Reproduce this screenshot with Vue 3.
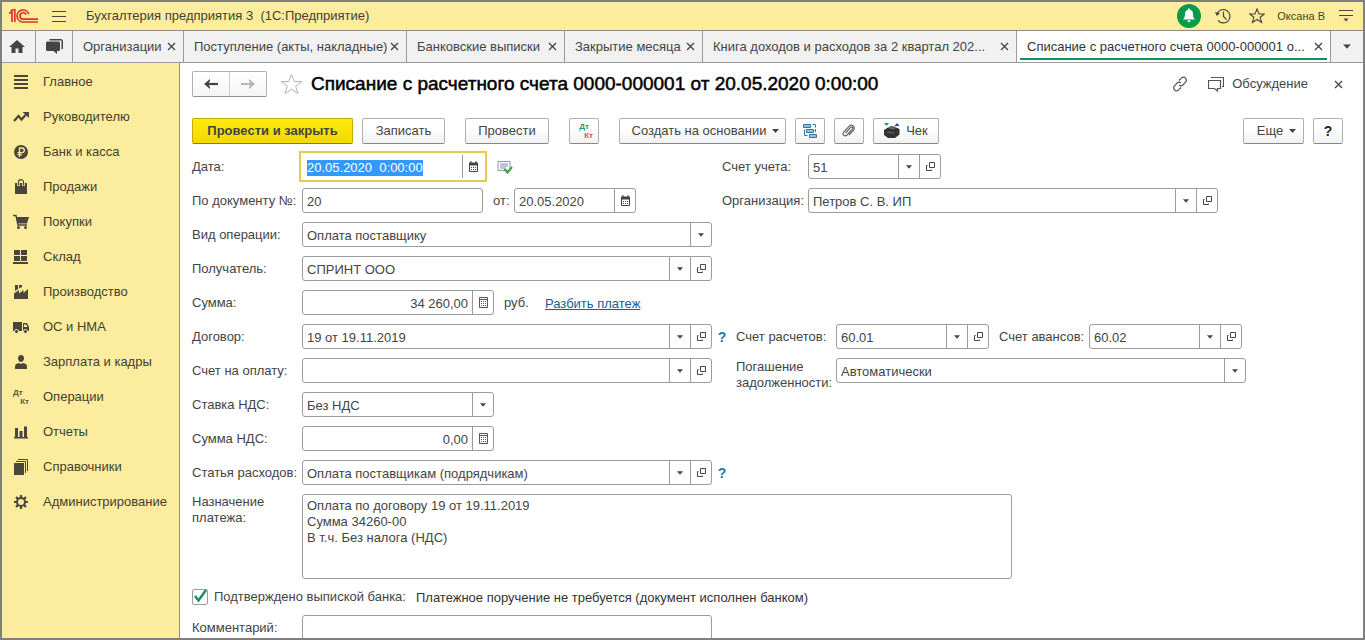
<script setup>
import { onMounted, ref } from 'vue'

const tabs = [
  { title: 'Организации', width: 111 },
  { title: 'Поступление (акты, накладные)', width: 223 },
  { title: 'Банковские выписки', width: 158 },
  { title: 'Закрытие месяца', width: 138 },
  { title: 'Книга доходов и расходов за 2 квартал 202...', width: 0 },
  { title: 'Списание с расчетного счета 0000-000001 о...', width: 0, active: true },
]

const sections = [
  { icon: 'lines', title: 'Главное' },
  { icon: 'trend', title: 'Руководителю' },
  { icon: 'ruble', title: 'Банк и касса' },
  { icon: 'bag', title: 'Продажи' },
  { icon: 'cart', title: 'Покупки' },
  { icon: 'stock', title: 'Склад' },
  { icon: 'factory', title: 'Производство' },
  { icon: 'truck', title: 'ОС и НМА' },
  { icon: 'person', title: 'Зарплата и кадры' },
  { icon: 'dtkt', title: 'Операции' },
  { icon: 'chart', title: 'Отчеты' },
  { icon: 'books', title: 'Справочники' },
  { icon: 'gear', title: 'Администрирование' },
]

const form = ref({
  date: '20.05.2020  0:00:00',
  number: '20',
  numberDate: '20.05.2020',
  account: '51',
  organization: 'Петров С. В. ИП',
  operation: 'Оплата поставщику',
  recipient: 'СПРИНТ ООО',
  sum: '34 260,00',
  contract: '19 от 19.11.2019',
  settlement: '60.01',
  advance: '60.02',
  invoice: '',
  repayment: 'Автоматически',
  vatRate: 'Без НДС',
  vatSum: '0,00',
  expense: 'Оплата поставщикам (подрядчикам)',
  purpose: 'Оплата по договору 19 от 19.11.2019\nСумма 34260-00\nВ т.ч. Без налога (НДС)',
  confirmed: true,
  comment: '',
})

const dateInput = ref(null)
onMounted(() => {
  dateInput.value.focus()
  dateInput.value.select()
})
</script>

<template>
  <div class="window">
    <svg class="sprite" aria-hidden="true">
      <symbol id="close" viewBox="0 0 9 9"><path d="M1 1l7 7M8 1L1 8" stroke="#444" stroke-width="1.3" fill="none" /></symbol>
      <symbol id="caret" viewBox="0 0 7 4"><path d="M0 0h7L3.500 4z" fill="#444" /></symbol>
      <symbol id="open" viewBox="0 0 11 11"><path d="M4.500 1.500h5v5h-5zM2.500 4.500h-1v5h5v-1" stroke="#444" fill="none" /></symbol>
      <symbol id="calendar" viewBox="0 0 11 11"><path d="M1.500 2.500h8v8h-8z" fill="#fff" stroke="#444" /><path d="M1 1.500h9v3H1zM2.500 0h1v2h-1zM7.500 0h1v2h-1z" fill="#444" /><path d="M3 6.500h6M3 8.500h6" stroke="#444" stroke-dasharray="1 1" /></symbol>
      <symbol id="calc" viewBox="0 0 11 11"><path d="M1.500.5h8v10h-8z" fill="#fff" stroke="#555" /><path d="M2 2.500h7" stroke="#555" /><path d="M3 4.500h6M3 6.500h6M3 8.500h6" stroke="#555" stroke-dasharray="1 1" /></symbol>

      <symbol id="lines" viewBox="0 0 16 16"><path d="M1 2h14M1 6h14M1 10h14M1 14h14" stroke="#4a463c" stroke-width="2" /></symbol>
      <symbol id="trend" viewBox="0 0 16 16"><path d="M1 12l4.500-5 3 3.500L13 5.500" stroke="#4a463c" stroke-width="2.200" fill="none" /><path d="M9.500 3H16v6z" fill="#4a463c" /></symbol>
      <symbol id="ruble" viewBox="0 0 16 16"><circle cx="8" cy="8" r="7" fill="#4a463c" /><path d="M6.500 13V4h2.500a2.300 2.300 0 0 1 0 4.600H4.500M4.500 10.600H9" stroke="#fbec9e" stroke-width="1.300" fill="none" /></symbol>
      <symbol id="bag" viewBox="0 0 16 16"><path d="M2 4h12v11H2z" fill="#4a463c" /><path d="M5.500 7V3.500a2.500 2.500 0 0 1 5 0V7" stroke="#fbec9e" stroke-width="2.800" fill="none" /><path d="M5.500 6.500V3.200a2.500 2.500 0 0 1 5 0v3.300" stroke="#4a463c" stroke-width="1.200" fill="none" /></symbol>
      <symbol id="cart" viewBox="0 0 16 16"><path d="M0 1.500h3l2 9.500h9" stroke="#4a463c" stroke-width="1.400" fill="none" /><path d="M3 3h13l-2 6.500H4.500z" fill="#4a463c" /><circle cx="5.500" cy="13.500" r="1.500" fill="#4a463c" /><circle cx="12.500" cy="13.500" r="1.500" fill="#4a463c" /></symbol>
      <symbol id="stock" viewBox="0 0 16 16"><path d="M1 1h6v5H1zM8 1h6v5H8zM1 7h6v5H1zM8 7h6v5H8zM0 13h15v2H0z" fill="#4a463c" /></symbol>
      <symbol id="factory" viewBox="0 0 16 16"><path d="M1 15V9.500L6 6v3.500L10.500 6v3L15 5v10zM2 1h3v4L2 7zM6 1h3v2L6 4.500z" fill="#4a463c" /></symbol>
      <symbol id="truck" viewBox="0 0 16 16"><path d="M0 3h9v9H0zM10 4h4l2 4v4h-6z" fill="#4a463c" /><path d="M11 5.500h2.300l1.200 2.500H11z" fill="#fbec9e" /><circle cx="3.500" cy="12.500" r="2" fill="#4a463c" stroke="#fbec9e" /><circle cx="12.500" cy="12.500" r="2" fill="#4a463c" stroke="#fbec9e" /></symbol>
      <symbol id="person" viewBox="0 0 16 16"><path d="M8 1c2 0 3 1.300 3 3.200S9.800 8 8 8 5 6.100 5 4.200 6 1 8 1zM2 15v-2.500C2 10 4 9.500 6 9l2 1 2-1c2 .5 4 1 4 3.500V15z" fill="#4a463c" /></symbol>
      <symbol id="chart" viewBox="0 0 16 16"><path d="M1 13h14v1.500H1zM2 4h3v9H2zM6.500 7h3v6h-3zM11 2.500h3V13h-3z" fill="#4a463c" /></symbol>
      <symbol id="books" viewBox="0 0 16 16"><path d="M1 4h10v12H1z" fill="#4a463c" /><path d="M3 2.500h9.500V14M5 .5h9.500V12" stroke="#4a463c" fill="none" /></symbol>
      <symbol id="gear" viewBox="0 0 16 16"><circle cx="8" cy="8" r="4" fill="none" stroke="#4a463c" stroke-width="2" /><path d="M8 1v2.500M8 12.500V15M1 8h2.500M12.500 8H15M3.050 3.050l1.800 1.800M11.150 11.150l1.800 1.800M3.050 12.950l1.800-1.800M11.150 4.850l1.800-1.800" stroke="#4a463c" stroke-width="2.200" /></symbol>
    </svg>

    <header class="titlebar">
      <svg class="logo" width="29" height="14" viewBox="0 0 29 14" role="img" aria-label="1С">
        <g fill="none" stroke="#d8372a" stroke-width="1.700">
          <path d="M0 4.500L3 2.800V13M1.500 1.800L5.800.2V13" />
          <path d="M19.800 5.200A6 6 0 1 0 14.500 13H29" />
          <path d="M17 5.500A3.200 3.200 0 1 0 14.500 10.200H29" />
        </g>
      </svg>
      <button class="plain" aria-label="Меню">
        <svg width="14" height="13" viewBox="0 0 14 13"><path d="M0 1.500h14M0 6.500h14M0 11.500h14" stroke="#4a463c" /></svg>
      </button>
      <span class="app-name">Бухгалтерия предприятия 3 &nbsp;(1С:Предприятие)</span>
      <button class="plain" aria-label="Оповещения">
        <svg width="24" height="24" viewBox="0 0 24 24"><circle cx="12" cy="12" r="12" fill="#0a9a4a" /><path d="M12 4.500c.8 0 1.200.5 1.200 1.200 2 .6 2.800 2.300 2.800 4.300 0 3 .8 4.300 2 5.500H6c1.200-1.200 2-2.500 2-5.500 0-2 .8-3.700 2.800-4.300 0-.7.4-1.200 1.200-1.200zM10.300 16.500h3.400a1.700 1.700 0 0 1-3.400 0z" fill="#fff" /></svg>
      </button>
      <button class="plain" aria-label="История">
        <svg width="16" height="16" viewBox="0 0 16 16"><path d="M2.200 5.500A6.700 6.700 0 1 1 3 12.300M8.500 3.500v5l3 3" fill="none" stroke="#4a463c" stroke-width="1.200" /><path d="M0 4l1.800 4L5 5.200z" fill="#4a463c" /></svg>
      </button>
      <button class="plain" aria-label="Избранное">
        <svg width="16" height="16" viewBox="0 0 16 16"><path d="M8 1l2 5h5.300l-4.200 3.300 1.500 5.200L8 11.500l-4.600 3 1.500-5.200L.7 6H6z" fill="none" stroke="#4a463c" stroke-width="1.100" /></svg>
      </button>
      <span class="user">Оксана В</span>
      <button class="plain" aria-label="Настройки окна">
        <svg width="14" height="14" viewBox="0 0 14 14"><path d="M0 1.500h14M0 6.500h14" stroke="#4a463c" /><path d="M4.500 9.500h5L7 12.500z" fill="#4a463c" /></svg>
      </button>
    </header>

    <nav class="tabs" aria-label="Открытые окна">
      <button class="tab-icon home" aria-label="Начальная страница">
        <svg width="16" height="13" viewBox="0 0 16 13"><path d="M8 0l8 7h-2.500v6h-4V8.500h-3V13h-4V7H0z" fill="#444" /></svg>
      </button>
      <button class="tab-icon talk" aria-label="Обсуждения">
        <svg width="17" height="15" viewBox="0 0 17 15"><path d="M3.500 0h12L17 1.500V10h-1.500V1.500h-12z" fill="#444" /><path d="M1 2.500h12l1 1V11l-1 1h-2v3l-3.500-3H1l-1-1V3.500z" fill="#444" /></svg>
      </button>
      <div
        v-for="tab in tabs"
        :key="tab.title"
        class="tab"
        :class="{ active: tab.active, fluid: !tab.width }"
        :style="tab.width ? { flexBasis: tab.width + 'px' } : null"
      >
        <a class="tab-title" href="#">{{ tab.title }}</a>
        <button class="plain" aria-label="Закрыть вкладку"><svg width="9" height="9"><use href="#close" /></svg></button>
      </div>
      <button class="tab-icon more" aria-label="Список окон"><svg width="8" height="5" viewBox="0 0 7 4"><use href="#caret" /></svg></button>
    </nav>

    <div class="body">
      <nav class="sections" aria-label="Разделы">
        <a v-for="section in sections" :key="section.title" class="section" href="#">
          <span v-if="section.icon === 'dtkt'" class="dtkt"><b>Дт</b><b>Кт</b></span>
          <svg v-else width="16" height="16"><use :href="'#' + section.icon" /></svg>
          <span>{{ section.title }}</span>
        </a>
      </nav>

      <main class="page">
        <div class="heading">
          <div class="history">
            <button aria-label="Назад"><svg width="14" height="10" viewBox="0 0 14 10"><path d="M2 5h12" stroke="#444" stroke-width="2.200" /><path d="M6 0v2L4 5l2 3v2L0 5z" fill="#444" /></svg></button>
            <button aria-label="Вперед"><svg width="14" height="10" viewBox="0 0 14 10"><path d="M0 5h12" stroke="#b5b5b5" stroke-width="2" /><path d="M8 0v2l2 3-2 3v2l6-5z" fill="#b5b5b5" /></svg></button>
          </div>
          <button class="plain star" aria-label="В избранное"><svg width="23" height="22" viewBox="0 0 23 22"><path d="M11.500 1.500l2.800 7h7.400l-6 4.700 2.300 7.300-6.500-4.400L5 20.500l2.300-7.300-6-4.700h7.400z" fill="none" stroke="#b5b5b5" /></svg></button>
          <h1>Списание с расчетного счета 0000-000001 от 20.05.2020 0:00:00</h1>
          <button class="plain" aria-label="Ссылка">
            <svg width="16" height="16" viewBox="0 0 16 16"><path d="M7 4.500l2.300-2.300a2.700 2.700 0 0 1 4.200 4L10.800 9a2.700 2.700 0 0 1-3.800 0M9 11.500l-2.300 2.300a2.700 2.700 0 0 1-4.200-4L5.200 7A2.700 2.700 0 0 1 9 7" fill="none" stroke="#555" stroke-width="1.200" /></svg>
          </button>
          <button class="plain discuss">
            <svg width="16" height="15" viewBox="0 0 16 15"><path d="M3 .5h12.500v9H14M.5 3.500h12v8H9.500V14L6.500 11.500h-6z" fill="none" stroke="#555" stroke-width="1.200" /></svg>
            <span>Обсуждение</span>
          </button>
          <button class="plain" aria-label="Закрыть"><svg width="9" height="9"><use href="#close" /></svg></button>
        </div>

        <div class="commands">
          <button class="btn primary">Провести и закрыть</button>
          <button class="btn write">Записать</button>
          <button class="btn post">Провести</button>
          <button class="btn square spaced" aria-label="Дт Кт">
            <span class="dtkt colored"><b>Дт</b><b>Кт</b></span>
          </button>
          <button class="btn create spaced">Создать на основании <svg width="7" height="4"><use href="#caret" /></svg></button>
          <button class="btn square" aria-label="Структура подчиненности">
            <svg width="16" height="16" viewBox="0 0 16 16"><g fill="#8fc1e6" stroke="#35789f"><path d="M1.500 1.500h7v3h-7zM4.500 6.500h7v3h-7zM7.500 11.500h7v3h-7z" /></g><path d="M10.500 1.500h3v3M2.500 6.500v6h3M13.500 6v3" fill="none" stroke="#35789f" /></svg>
          </button>
          <button class="btn square" aria-label="Файлы">
            <svg width="14" height="14" viewBox="0 0 14 14"><path d="M3.500 9l5-5.500c1.300-1.300 3 .2 1.900 1.600L5 11C3 13-.3 10.500 1.700 8.200l5.500-6C9.500-.3 14 2.700 11.700 5.800L7 11" fill="none" stroke="#666" stroke-width="1.200" /></svg>
          </button>
          <button class="btn check">
            <svg width="16" height="16" viewBox="0 0 16 16"><path d="M0 7l4-2.500h8L15.500 6v5.500L11 15H4l-4-3z" fill="#333" /><path d="M4 4.500l3-1.500 5 1-2 2zM3 9l7 1" fill="#555" stroke="#999" stroke-width=".6" /><path d="M0 0h5L2.500 3z" fill="#1c9a62" /><path d="M10.500 3h5L13 0z" fill="#2b4a9b" /></svg>
            Чек
          </button>
          <span class="grow"></span>
          <button class="btn else">Еще <svg width="7" height="4"><use href="#caret" /></svg></button>
          <button class="btn square help">?</button>
        </div>

        <form class="form" @submit.prevent>
          <div class="row">
            <label class="lead" for="date">Дата:</label>
            <div class="field date focused">
              <input id="date" ref="dateInput" v-model="form.date" />
              <button type="button" aria-label="Выбрать дату"><svg width="11" height="11"><use href="#calendar" /></svg></button>
            </div>
            <svg class="status" width="16" height="14" viewBox="0 0 16 14"><path d="M1 1.500h12v9H1z" fill="#fff" stroke="#8a93a8" /><path d="M3 4h8M3 6h8M3 8h6" stroke="#7888b8" /><path d="M7.500 9l3 3.500L15 7" fill="none" stroke="#3fa548" stroke-width="2.200" /></svg>
            <div class="side">
              <label class="side-label" for="account">Счет учета:</label>
              <div class="field account">
                <input id="account" v-model="form.account" />
                <button type="button" aria-label="Список"><svg class="drop"><use href="#caret" /></svg></button>
                <button type="button" aria-label="Открыть"><svg width="11" height="11"><use href="#open" /></svg></button>
              </div>
            </div>
          </div>

          <div class="row">
            <label class="lead" for="number">По документу №:</label>
            <div class="field number"><input id="number" v-model="form.number" /></div>
            <label class="from" for="number-date">от:</label>
            <div class="field short-date">
              <input id="number-date" v-model="form.numberDate" />
              <button type="button" aria-label="Выбрать дату"><svg width="11" height="11"><use href="#calendar" /></svg></button>
            </div>
            <div class="side">
              <label class="side-label" for="organization">Организация:</label>
              <div class="field wide">
                <input id="organization" v-model="form.organization" />
                <button type="button" aria-label="Список"><svg class="drop"><use href="#caret" /></svg></button>
                <button type="button" aria-label="Открыть"><svg width="11" height="11"><use href="#open" /></svg></button>
              </div>
            </div>
          </div>

          <div class="row">
            <label class="lead" for="operation">Вид операции:</label>
            <div class="field wide">
              <select id="operation" v-model="form.operation"><option>Оплата поставщику</option></select>
              <button type="button" aria-label="Список"><svg class="drop"><use href="#caret" /></svg></button>
            </div>
          </div>

          <div class="row">
            <label class="lead" for="recipient">Получатель:</label>
            <div class="field wide">
              <input id="recipient" v-model="form.recipient" />
              <button type="button" aria-label="Список"><svg class="drop"><use href="#caret" /></svg></button>
              <button type="button" aria-label="Открыть"><svg width="11" height="11"><use href="#open" /></svg></button>
            </div>
          </div>

          <div class="row">
            <label class="lead" for="sum">Сумма:</label>
            <div class="field amount">
              <input id="sum" v-model="form.sum" />
              <button type="button" aria-label="Калькулятор"><svg width="11" height="11"><use href="#calc" /></svg></button>
            </div>
            <span class="currency">руб.</span>
            <a class="split" href="#">Разбить платеж</a>
          </div>

          <div class="row">
            <label class="lead" for="contract">Договор:</label>
            <div class="field wide">
              <input id="contract" v-model="form.contract" />
              <button type="button" aria-label="Список"><svg class="drop"><use href="#caret" /></svg></button>
              <button type="button" aria-label="Открыть"><svg width="11" height="11"><use href="#open" /></svg></button>
            </div>
            <button type="button" class="plain hint">?</button>
            <label class="sub-label" for="settlement">Счет расчетов:</label>
            <div class="field ledger">
              <input id="settlement" v-model="form.settlement" />
              <button type="button" aria-label="Список"><svg class="drop"><use href="#caret" /></svg></button>
              <button type="button" aria-label="Открыть"><svg width="11" height="11"><use href="#open" /></svg></button>
            </div>
            <label class="advance" for="advance">Счет авансов:</label>
            <div class="field ledger">
              <input id="advance" v-model="form.advance" />
              <button type="button" aria-label="Список"><svg class="drop"><use href="#caret" /></svg></button>
              <button type="button" aria-label="Открыть"><svg width="11" height="11"><use href="#open" /></svg></button>
            </div>
          </div>

          <div class="row">
            <label class="lead" for="invoice">Счет на оплату:</label>
            <div class="field wide">
              <input id="invoice" v-model="form.invoice" />
              <button type="button" aria-label="Список"><svg class="drop"><use href="#caret" /></svg></button>
              <button type="button" aria-label="Открыть"><svg width="11" height="11"><use href="#open" /></svg></button>
            </div>
            <label class="sub-label two-line" for="repayment">Погашение задолженности:</label>
            <div class="field wide">
              <select id="repayment" v-model="form.repayment"><option>Автоматически</option></select>
              <button type="button" aria-label="Список"><svg class="drop"><use href="#caret" /></svg></button>
            </div>
          </div>

          <div class="row">
            <label class="lead" for="vat-rate">Ставка НДС:</label>
            <div class="field rate">
              <select id="vat-rate" v-model="form.vatRate"><option>Без НДС</option></select>
              <button type="button" aria-label="Список"><svg class="drop"><use href="#caret" /></svg></button>
            </div>
          </div>

          <div class="row">
            <label class="lead" for="vat-sum">Сумма НДС:</label>
            <div class="field amount">
              <input id="vat-sum" v-model="form.vatSum" />
              <button type="button" aria-label="Калькулятор"><svg width="11" height="11"><use href="#calc" /></svg></button>
            </div>
          </div>

          <div class="row">
            <label class="lead" for="expense">Статья расходов:</label>
            <div class="field wide">
              <input id="expense" v-model="form.expense" />
              <button type="button" aria-label="Список"><svg class="drop"><use href="#caret" /></svg></button>
              <button type="button" aria-label="Открыть"><svg width="11" height="11"><use href="#open" /></svg></button>
            </div>
            <button type="button" class="plain hint">?</button>
          </div>

          <div class="row top">
            <label class="lead" for="purpose">Назначение<br />платежа:</label>
            <textarea id="purpose" v-model="form.purpose" class="purpose"></textarea>
          </div>

          <div class="row confirm">
            <span class="tick">
              <input id="confirmed" v-model="form.confirmed" type="checkbox" />
              <svg width="16" height="16" viewBox="0 0 16 16"><path d="M3 7l3.500 4.500L14 1" fill="none" stroke="#16905a" stroke-width="2.400" /></svg>
            </span>
            <label for="confirmed">Подтверждено выпиской банка:</label>
            <span class="note">Платежное поручение не требуется (документ исполнен банком)</span>
          </div>

          <div class="row">
            <label class="lead" for="comment">Комментарий:</label>
            <div class="field wide"><input id="comment" v-model="form.comment" /></div>
          </div>
        </form>
      </main>
    </div>
  </div>
</template>

<style>
body {
  margin: 0;
  background: #fff;
}
</style>

<style scoped>
* {
  box-sizing: border-box;
}
.window {
  display: flex;
  flex-direction: column;
  height: 100vh;
  border: 2px solid #7f7f7f;
  overflow: hidden;
  background: #fff;
  color: #444;
  font: 13px/16px "Liberation Sans", Arial, sans-serif;
}
.sprite {
  position: absolute;
  width: 0;
  height: 0;
}
button,
input,
select,
textarea {
  font: inherit;
  color: inherit;
  margin: 0;
}
button {
  display: flex;
  align-items: center;
  justify-content: center;
  cursor: pointer;
}
svg {
  display: block;
  flex: none;
}
a {
  color: inherit;
  text-decoration: none;
}
.plain {
  flex: none;
  padding: 0;
  border: 0;
  background: none;
}
.dtkt {
  display: flex;
  flex-direction: column;
  width: 16px;
  color: #5a5546;
  font-size: 8px;
  line-height: 9px;
}
.dtkt b:last-child {
  align-self: flex-end;
}
.colored {
  width: 18px;
  color: #1c9a62;
}
.colored b:last-child {
  color: #d0524e;
}

.titlebar {
  display: flex;
  align-items: center;
  flex: none;
  height: 29px;
  padding: 0 10px 0 7px;
  background: #fbec9e;
  border-bottom: 1px solid #8c8c84;
  color: #443f2e;
}
.logo {
  margin-right: 14px;
}
.app-name {
  flex: 1;
  margin-left: 20px;
  white-space: nowrap;
}
.titlebar .plain + .plain {
  margin-left: 14px;
}
.titlebar .plain + .plain + .plain {
  margin-left: 18px;
}
.user {
  margin: 0 14px 0 12px;
  font-size: 11px;
}

.tabs {
  display: flex;
  flex: none;
  height: 32px;
  background: #f1f1f1;
  border-bottom: 1px solid #9a9a9a;
}
.tab-icon {
  flex: none;
  padding: 0;
  border: 0;
  border-right: 1px solid #9a9a9a;
  background: none;
}
.home {
  width: 34px;
  padding-right: 4px;
}
.talk {
  width: 37px;
}
.tab {
  display: flex;
  align-items: center;
  flex: none;
  min-width: 0;
  padding: 0 7px 0 10px;
  border-right: 1px solid #9a9a9a;
}
.tab.fluid {
  flex: 1 1 0;
}
.tab-title {
  flex: 1;
  overflow: hidden;
  white-space: nowrap;
}
.tab.active {
  background: linear-gradient(#16905a, #16905a) center bottom 2px / calc(100% - 6px) 2px no-repeat #fff;
  color: #333;
}
.more {
  width: 32px;
  border-right: 0;
}

.body {
  display: flex;
  flex: 1;
  min-height: 0;
}
.sections {
  flex: none;
  width: 178px;
  padding-top: 1px;
  background: #fbec9e;
  border-right: 1px solid #8c8c84;
  color: #443f2e;
}
.section {
  display: flex;
  align-items: center;
  gap: 14px;
  height: 35px;
  padding-left: 11px;
  white-space: nowrap;
}

.page {
  flex: 1;
  min-width: 0;
  padding: 8px 20px 0 12px;
}
.heading {
  display: flex;
  align-items: center;
  height: 26px;
}
.history {
  display: flex;
  border: 1px solid #b0b0b0;
  border-bottom-color: #909090;
  border-radius: 2px;
}
.history button {
  width: 36px;
  height: 24px;
  padding: 0;
  border: 0;
  background: linear-gradient(#fff, #f4f4f4);
}
.history button + button {
  width: 37px;
  border-left: 1px solid #cfcfcf;
}
.star {
  margin: 0 8px 0 13px;
}
h1 {
  flex: 1;
  margin: 0;
  color: #000;
  font-size: 19px;
  line-height: 24px;
  font-weight: 400;
  -webkit-text-stroke: 0.5px #000;
  white-space: nowrap;
}
.discuss {
  gap: 8px;
  margin: 0 26px 0 20px;
}
.heading .plain:last-child {
  width: 9px;
}

.commands {
  display: flex;
  gap: 9px;
  margin: 21px 0 10px;
}
.btn {
  flex: none;
  gap: 6px;
  height: 26px;
  padding: 0;
  border: 1px solid #b0b0b0;
  border-bottom-color: #888;
  border-radius: 2px;
  background: linear-gradient(#fff 40%, #f0f0f0);
  white-space: nowrap;
}
.primary {
  width: 161px;
  border-color: #c5aa00 #c5aa00 #8f7c00;
  background: linear-gradient(#ffe90f, #f2d900);
  font-weight: 700;
}
.write {
  width: 83px;
}
.post {
  width: 84px;
  margin-left: 11px;
}
.spaced {
  margin-left: 11px;
}
.square {
  width: 30px;
}
.create {
  width: 167px;
  padding-left: 6px;
}
.check {
  width: 66px;
}
.grow {
  flex: 1;
}
.else {
  width: 61px;
  padding-left: 6px;
}
.help {
  color: #222;
  font-size: 14px;
  font-weight: 700;
}

.form {
  display: flex;
  flex-direction: column;
  gap: 9px;
}
.row {
  display: flex;
  align-items: center;
  flex: none;
  height: 25px;
}
.row label,
.row span {
  flex: none;
  white-space: nowrap;
}
.row .lead {
  width: 110px;
}
.field {
  display: flex;
  flex: none;
  height: 25px;
  border: 1px solid #9c9c9c;
  border-radius: 3px;
  background: #fff;
}
.field input,
.field select {
  flex: 1;
  min-width: 0;
  padding: 2px 4px 0;
  border: 0;
  outline: 0;
  background: none;
  appearance: none;
  white-space: pre;
}
.field button {
  flex: none;
  width: 21px;
  padding: 0;
  border: 0;
  border-left: 1px solid #9c9c9c;
  background: none;
}
.drop {
  width: 6px;
  height: 4px;
}
.focused {
  border-color: #fff;
  border-radius: 0;
  outline: 2px solid #e6cb4a;
  outline-offset: 1px;
}
.focused input::selection {
  background: #3399ff;
  color: #fff;
}
.date {
  width: 182px;
}
.number {
  width: 181px;
}
.short-date {
  width: 122px;
}
.wide {
  width: 410px;
}
.account {
  width: 133px;
}
.amount,
.rate {
  width: 192px;
}
.amount input {
  text-align: right;
}
.ledger {
  width: 153px;
}
.status {
  margin: 0 209px 0 13px;
}
.side {
  display: flex;
  align-items: center;
}
.row .side-label {
  width: 86px;
}
.row .from {
  width: 21px;
  margin-left: 10px;
}
.short-date + .side {
  margin-left: 86px;
}
.row .currency {
  width: 41px;
  margin-left: 10px;
}
.split {
  padding-top: 2px;
  color: #1f5a96;
  text-decoration: underline;
}
.hint {
  width: 24px;
  color: #2278ae;
  font-size: 14px;
  font-weight: 700;
}
.row .hint {
  padding-right: 4px;
}
.row .sub-label {
  width: 100px;
}
.row .two-line {
  margin: 8px 0 0 24px;
  white-space: normal;
}
.row .advance {
  width: 90px;
  margin-left: 10px;
}
.row.top {
  align-items: flex-start;
  height: 85px;
}
.purpose {
  width: 710px;
  height: 85px;
  padding: 3px 4px;
  border: 1px solid #9c9c9c;
  border-radius: 3px;
  outline: 0;
  resize: none;
}
.row.confirm {
  height: 18px;
}
.tick {
  display: grid;
  margin-right: 6px;
}
.tick > * {
  grid-area: 1 / 1;
}
.tick input {
  width: 16px;
  height: 16px;
  border: 1px solid #9c9c9c;
  border-radius: 2px;
  background: #fff;
  appearance: none;
}
.tick svg {
  pointer-events: none;
  visibility: hidden;
}
.tick input:checked + svg {
  visibility: visible;
}
.row .note {
  padding-top: 2px;
  margin-left: 10px;
  color: #333;
}
</style>
